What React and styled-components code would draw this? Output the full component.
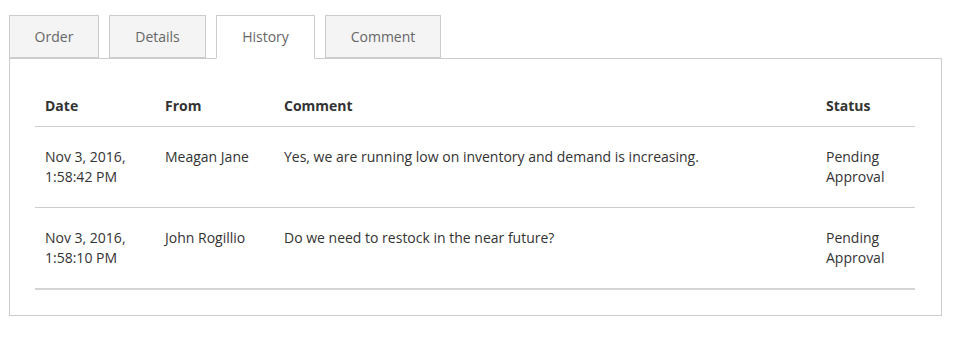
import React from "react";
import styled, { createGlobalStyle } from "styled-components";

const GlobalStyle = createGlobalStyle`
  html, body { margin: 0; padding: 0; background: #fff; }
  body { font-family: "Open Sans", "Liberation Sans", sans-serif; color: #333; }
`;

const Page = styled.div`
  padding: 15px 11px 0 9px;
`;

const TabBar = styled.div`
  display: flex;
  gap: 10px;
  position: relative;
  z-index: 1;
`;

const Tab = styled.button`
  font-family: "Open Sans", "Liberation Sans", sans-serif;
  font-size: 14px;
  color: #666;
  height: ${(p) => (p.$active ? "44px" : "43px")};
  margin-bottom: ${(p) => (p.$active ? "-1px" : "0")};
  padding: 0;
  width: ${(p) => p.$w}px;
  box-sizing: border-box;
  border: 1px solid #ccc;
  border-bottom: ${(p) => (p.$active ? "1px solid #fff" : "1px solid #ccc")};
  background: ${(p) => (p.$active ? "#fff" : "#f4f4f4")};
  cursor: pointer;
  line-height: 20px;
  padding-bottom: ${(p) => (p.$active ? "1px" : "0")};
`;

const Panel = styled.div`
  border: 1px solid #ccc;
  padding: 26px 26px 25px 25px;
`;

const Table = styled.table`
  width: 100%;
  table-layout: fixed;
  border-collapse: collapse;
  font-size: 14px;
  line-height: 20px;
  border-bottom: 2px solid #d4d4d4;
`;

const Th = styled.th`
  box-sizing: border-box;
  text-align: left;
  font-weight: 700;
  padding: 11px 10px 10px;
  border-bottom: 1px solid #ccc;
  width: ${(p) => (p.$w ? `${p.$w}px` : "auto")};
  color: #333;
`;

const Td = styled.td`
  padding: 20px 10px 20px;
  vertical-align: top;
  border-bottom: 1px solid #ccc;
  color: #333;
`;

const Row = styled.tr`
  &:last-child td { border-bottom: none; }
`;

const tabs = [
  { label: "Order", w: 90 },
  { label: "Details", w: 97 },
  { label: "History", w: 99, active: true },
  { label: "Comment", w: 116 },
];

const rows = [
  {
    date: ["Nov 3, 2016,", "1:58:42 PM"],
    from: "Meagan Jane",
    comment: "Yes, we are running low on inventory and demand is increasing.",
    status: ["Pending", "Approval"],
  },
  {
    date: ["Nov 3, 2016,", "1:58:10 PM"],
    from: "John Rogillio",
    comment: "Do we need to restock in the near future?",
    status: ["Pending", "Approval"],
  },
];

export default function App() {
  return (
    <>
      <GlobalStyle />
      <Page>
        <TabBar>
          {tabs.map((t) => (
            <Tab key={t.label} $w={t.w} $active={t.active}>
              {t.label}
            </Tab>
          ))}
        </TabBar>
        <Panel>
          <Table>
            <thead>
              <tr>
                <Th $w={120}>Date</Th>
                <Th $w={119}>From</Th>
                <Th>Comment</Th>
                <Th $w={99}>Status</Th>
              </tr>
            </thead>
            <tbody>
              {rows.map((r, i) => (
                <Row key={i}>
                  <Td>
                    {r.date[0]}
                    <br />
                    {r.date[1]}
                  </Td>
                  <Td>{r.from}</Td>
                  <Td>{r.comment}</Td>
                  <Td>
                    {r.status[0]}
                    <br />
                    {r.status[1]}
                  </Td>
                </Row>
              ))}
            </tbody>
          </Table>
        </Panel>
      </Page>
    </>
  );
}
